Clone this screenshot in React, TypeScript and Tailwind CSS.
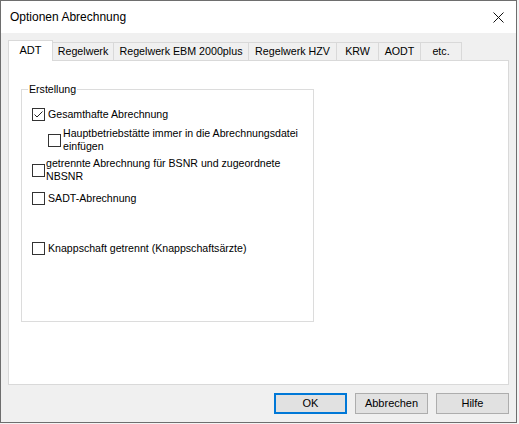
import React from "react";

function Box({ checked = false }: { checked?: boolean }) {
  return (
    <div className="w-[13px] h-[13px] border border-[#333333] bg-white shrink-0 flex items-center justify-center">
      {checked && (
        <svg width="11" height="11" viewBox="0 0 11 11">
          <path d="M1.5 5.5 L4 8 L9.5 2.5" fill="none" stroke="#222" strokeWidth="1" />
        </svg>
      )}
    </div>
  );
}

const tabs = [
  { label: "Regelwerk", w: "w-[61px]" },
  { label: "Regelwerk EBM 2000plus", w: "w-[135px]" },
  { label: "Regelwerk HZV", w: "w-[88px]" },
  { label: "KRW", w: "w-[42px]" },
  { label: "AODT", w: "w-[42px]" },
  { label: "etc.", w: "w-[41px]" },
];

export default function App() {
  return (
    <div className="w-[519px] h-[424px] bg-[#f4f4f4] overflow-hidden">
      <div className="w-[517px] h-[423px] border border-[#6e6e6e] bg-[#f0f0f0] flex flex-col font-['Liberation_Sans',Arial,sans-serif] text-black">
        <div className="h-[32px] shrink-0 bg-white flex items-center justify-between pl-[9px] pr-[9px]">
          <span className="text-[12px] leading-none">Optionen Abrechnung</span>
          <svg width="11" height="11" viewBox="0 0 11 11" className="mr-[3px]">
            <path d="M0.5 0.5 L10.5 10.5 M10.5 0.5 L0.5 10.5" stroke="#111" strokeWidth="1" />
          </svg>
        </div>
        <div className="pl-[7px] pt-[7px] flex flex-col">
          <div className="flex items-end h-[20px] text-[10.7px]">
            <div className="w-[45px] h-[21px] -mb-px relative z-10 bg-white border-l border-t border-r border-[#d9d9d9] flex items-center justify-center pb-[1px] text-[11px]">
              ADT
            </div>
            {tabs.map((t) => (
              <div
                key={t.label}
                className={`${t.w} h-[18px] bg-[#f0f0f0] border-t border-r border-[#d9d9d9] flex items-center justify-center`}
              >
                {t.label}
              </div>
            ))}
          </div>
          <div className="w-[501px] h-[325px] border border-[#d9d9d9] bg-white pl-[12px] pt-[28px]">
            <div className="relative w-[293px] h-[233px] border border-[#dcdcdc] pt-[18px] text-[10.6px] leading-[13px]">
              <span className="absolute -top-[7px] left-[6px] bg-white px-[1px] leading-[13px]">Erstellung</span>
              <div className="flex items-center gap-[3px] pl-[10px]">
                <Box checked />
                <span>Gesamthafte Abrechnung</span>
              </div>
              <div className="flex items-center gap-[2px] pl-[26px] mt-[6px]">
                <Box />
                <span>
                  Hauptbetriebstätte immer in die Abrechnungsdatei
                  <br />
                  einfügen
                </span>
              </div>
              <div className="flex items-center gap-[1px] pl-[10px] mt-[4px]">
                <Box />
                <span>
                  getrennte Abrechnung für BSNR und zugeordnete
                  <br />
                  NBSNR
                </span>
              </div>
              <div className="flex items-center gap-[3px] pl-[10px] mt-[9px]">
                <Box />
                <span>SADT-Abrechnung</span>
              </div>
              <div className="flex items-center gap-[3px] pl-[10px] mt-[37px]">
                <Box />
                <span>Knappschaft getrennt (Knappschaftsärzte)</span>
              </div>
            </div>
          </div>
        </div>
        <div className="flex justify-end gap-[8px] pr-[7px] mt-[8px] text-[11px]">
          <button className="w-[73px] h-[21px] bg-[#e1e1e1] border-2 border-[#0078d7] flex items-center justify-center">OK</button>
          <button className="w-[73px] h-[21px] bg-[#e1e1e1] border border-[#adadad] flex items-center justify-center">Abbrechen</button>
          <button className="w-[73px] h-[21px] bg-[#e1e1e1] border border-[#adadad] flex items-center justify-center">Hilfe</button>
        </div>
      </div>
    </div>
  );
}
